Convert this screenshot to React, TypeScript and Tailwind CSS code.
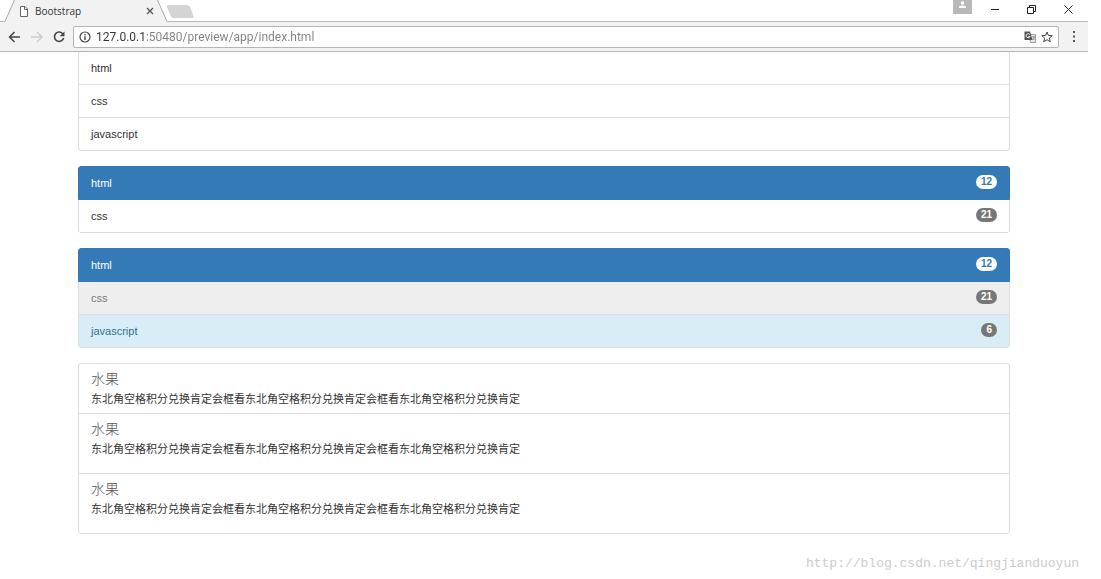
import { useState } from "react";

type Item = {
  label: string;
  count?: number;
  tone?: "active" | "disabled" | "info";
};

const topics: Item[] = [{ label: "html" }, { label: "css" }, { label: "javascript" }];

const counted: Item[] = [
  { label: "html", count: 12, tone: "active" },
  { label: "css", count: 21 },
];

const states: Item[] = [
  { label: "html", count: 12, tone: "active" },
  { label: "css", count: 21, tone: "disabled" },
  { label: "javascript", count: 6, tone: "info" },
];

const fruitText = "东北角空格积分兑换肯定会框看东北角空格积分兑换肯定会框看东北角空格积分兑换肯定";

const tones = {
  default: "border-[#ddd] bg-white text-[#333]",
  active: "z-10 border-[#337ab7] bg-[#337ab7] text-white",
  disabled: "border-[#ddd] bg-[#eee] text-[#777]",
  info: "border-[#ddd] bg-[#d9edf7] text-[#31708f]",
};

function ListGroup({ items }: { items: Item[] }) {
  return (
    <ul>
      {items.map((item) => (
        <li
          key={item.label}
          className={`relative -mt-px flex h-[34px] items-center justify-between border px-3 first:mt-0 first:rounded-t-[3px] last:rounded-b-[3px] ${tones[item.tone ?? "default"]}`}
        >
          <span>{item.label}</span>
          {item.count !== undefined && (
            <span
              className={`mb-0.5 h-3.5 rounded-full px-[5px] text-[10px] leading-[14px] font-bold ${
                item.tone === "active" ? "bg-white text-[#337ab7]" : "bg-[#777] text-white"
              }`}
            >
              {item.count}
            </span>
          )}
        </li>
      ))}
    </ul>
  );
}

function FruitItem({ tall }: { tall?: boolean }) {
  return (
    <li
      className={`-mt-px border border-[#ddd] px-3 pt-1.5 first:mt-0 first:rounded-t-[3px] last:rounded-b-[3px] ${
        tall ? "pb-4" : "pb-1.5"
      }`}
    >
      <h4 className="text-[14px] leading-[18px] font-light text-[#555]">水果</h4>
      <p className="pt-[3px] text-[11px] leading-4 text-[#333]">{fruitText}</p>
    </li>
  );
}

function TabStrip() {
  return (
    <div className="flex h-[22px] border-b border-[#b8b8b8] bg-white">
      <div className="relative ml-[5px] flex h-[22px] w-[162px] items-center pl-[15px] pr-[13px]">
        <svg className="absolute inset-0" width="162" height="22" viewBox="0 0 162 22" aria-hidden="true">
          <path d="M0 21.5 L9.500 0 H152.500 L162 21.500 V22 H0 Z" fill="#f2f2f2" />
          <path d="M0 21.500 L9.500 0 M152.500 0 L162 21.500" fill="none" stroke="#a9a9a9" />
        </svg>
        <svg className="relative" width="8" height="11" viewBox="0 0 8 11" fill="#fff" stroke="#666" aria-hidden="true">
          <path d="M.5 .5 H5 L7.500 3 V10.500 H.5 Z M4.500 .5 V3.500 H7.500" />
        </svg>
        <span className="relative ml-[7px] flex-1 font-['Open_Sans',sans-serif] text-[10px] leading-none text-[#333]">
          Bootstrap
        </span>
        <button aria-label="Close tab" className="relative">
          <svg width="8" height="8" viewBox="0 0 8 8" stroke="#555" strokeWidth="1.400">
            <path d="M1 1 L7 7 M7 1 L1 7" />
          </svg>
        </button>
      </div>
      <button aria-label="New tab" className="mt-[5px] h-[13px] w-7">
        <svg width="28" height="13" viewBox="0 0 28 13">
          <path
            d="M1.500 .5 H20 Q22 .5 22.800 2.500 L26 11 Q26.500 12.500 25 12.500 H7 Q5 12.500 4.200 11 L.5 2 Q0 .5 1.500 .5 Z"
            fill="#d4d4d4"
            stroke="#c4c4c4"
            strokeWidth=".6"
          />
        </svg>
      </button>
      <div className="ml-auto flex items-start">
        <button aria-label="Profile" className="flex h-3.5 w-[19px] justify-center bg-[#b8b8b8]">
          <svg width="9" height="9" viewBox="0 0 9 9" fill="#fff">
            <circle cx="4.500" cy="3" r="1.800" />
            <path d="M1 8 V7 Q1 5.500 4.500 5.500 Q8 5.500 8 7 V8 Z" />
          </svg>
        </button>
        <button aria-label="Minimize" className="ml-[19px] mt-[5px]">
          <svg width="9" height="9" viewBox="0 0 9 9" stroke="#222">
            <path d="M0 4.500 H8" />
          </svg>
        </button>
        <button aria-label="Restore" className="ml-[27px] mt-[5px]">
          <svg width="9" height="9" viewBox="0 0 9 9" fill="none" stroke="#222">
            <path d="M.5 2.500 H6.500 V8.500 H.5 Z M2.500 2.500 V.5 H8.500 V6.500 H6.500" />
          </svg>
        </button>
        <button aria-label="Close" className="ml-7 mr-[15px] mt-[5px]">
          <svg width="9" height="9" viewBox="0 0 9 9" stroke="#222">
            <path d="M.5 .5 L8.500 8.500 M8.500 .5 L.5 8.500" />
          </svg>
        </button>
      </div>
    </div>
  );
}

function Toolbar() {
  const [url, setUrl] = useState("127.0.0.1:50480/preview/app/index.html");

  return (
    <div className="flex h-[30px] items-center border-b border-[#b8b8b8] bg-[#f2f2f2] pl-2">
      <button aria-label="Back">
        <svg width="13" height="12" viewBox="0 0 13 12" fill="none" stroke="#444" strokeWidth="1.500">
          <path d="M12 6 H1.500 M6.500 1 L1.500 6 L6.500 11" />
        </svg>
      </button>
      <button aria-label="Forward" className="ml-2.5">
        <svg width="12" height="12" viewBox="0 0 12 12" fill="none" stroke="#ccc" strokeWidth="1.500">
          <path d="M0 6 H10.500 M6 1 L11 6 L6 11" />
        </svg>
      </button>
      <button aria-label="Reload" className="ml-2.5">
        <svg width="12" height="12" viewBox="0 0 12 12" fill="none" stroke="#444" strokeWidth="1.600">
          <path d="M10 3 A4.700 4.700 0 1 0 10.700 7" />
          <path d="M11.500 .5 V5.300 H6.700 Z" fill="#444" stroke="none" />
        </svg>
      </button>
      <div className="ml-2 flex h-[22px] flex-1 items-center rounded-[2px] border border-[#b5b5b5] bg-white pl-[5px] pr-[5px]">
        <svg width="12" height="12" viewBox="0 0 12 12" fill="none" stroke="#444" strokeWidth="1.200" aria-hidden="true">
          <circle cx="6" cy="6" r="5" />
          <path d="M6 5.200 V9 M6 3 V4.300" strokeWidth="1.400" />
        </svg>
        {/* host part is darker than the path */}
        <input
          aria-label="Address"
          value={url}
          onChange={(e) => setUrl(e.target.value)}
          className="ml-[5px] min-w-0 flex-1 bg-[linear-gradient(90deg,#333_49px,#808080_49px)] bg-clip-text font-[Roboto,sans-serif] text-[12px] leading-4 text-transparent outline-none"
        />
        <button aria-label="Translate this page">
          <svg width="12" height="12" viewBox="0 0 12 12">
            <path d="M5 3.500 H11.500 V11.500 H6.500 Z" fill="#e8e8e8" stroke="#888" strokeWidth=".8" />
            <path d="M.5 .5 H6 L8.500 9 H.5 Z" fill="#555" />
            <path d="M5.800 3.600 A2 2 0 1 0 6 5.500 H4.300" fill="none" stroke="#fff" strokeWidth=".9" />
            <path d="M8 6 H11 M9.500 5 V6 M10.500 6 Q10 8 8.500 9 M8.700 7 L10.500 9" fill="none" stroke="#777" strokeWidth=".7" />
          </svg>
        </button>
        <button aria-label="Bookmark this page" className="ml-[5px]">
          <svg width="12" height="12" viewBox="0 0 12 12" fill="none" stroke="#444">
            <path d="M6 1 L7.400 4.500 L11.200 4.700 L8.300 7.100 L9.300 10.800 L6 8.700 L2.700 10.800 L3.700 7.100 L.8 4.700 L4.600 4.500 Z" />
          </svg>
        </button>
      </div>
      <button aria-label="Menu" className="pl-3.5 pr-[13px]">
        <svg width="2" height="11" viewBox="0 0 2 11" fill="#555">
          <path d="M0 0 H2 V2 H0 Z M0 4.500 H2 V6.500 H0 Z M0 9 H2 V11 H0 Z" />
        </svg>
      </button>
    </div>
  );
}

export default function App() {
  return (
    <div className="min-h-screen bg-white font-['Liberation_Sans','Noto_Sans_CJK_SC',sans-serif] text-[11px] leading-4">
      <div className="mr-[13px]">
        <header className="relative z-20">
          <TabStrip />
          <Toolbar />
        </header>
        {/* the first group slides one pixel under the toolbar */}
        <main className="-mt-px flex flex-col gap-[15px] px-[78px]">
          <ListGroup items={topics} />
          <ListGroup items={counted} />
          <ListGroup items={states} />
          <ul>
            <FruitItem />
            <FruitItem tall />
            <FruitItem tall />
          </ul>
        </main>
      </div>
      <footer className="pt-[21px] pr-[22px] text-right font-['Liberation_Mono',monospace] text-[13px] leading-[18px] text-[#ccc]">
        http://blog.csdn.net/qingjianduoyun
      </footer>
    </div>
  );
}
